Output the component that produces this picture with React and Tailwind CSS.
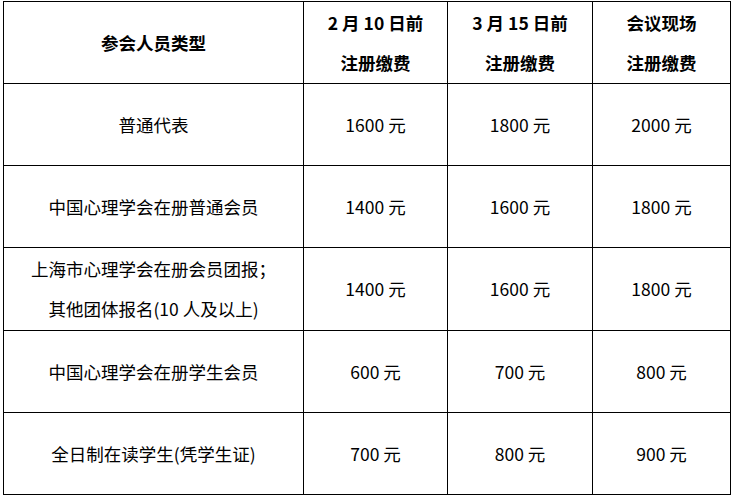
const rows = [
  { type: ['普通代表'], prices: ['1600 元', '1800 元', '2000 元'] },
  { type: ['中国心理学会在册普通会员'], prices: ['1400 元', '1600 元', '1800 元'] },
  { type: ['上海市心理学会在册会员团报；', '其他团体报名(10 人及以上)'], prices: ['1400 元', '1600 元', '1800 元'], tall: true },
  { type: ['中国心理学会在册学生会员'], prices: ['600 元', '700 元', '800 元'] },
  { type: ['全日制在读学生(凭学生证)'], prices: ['700 元', '800 元', '900 元'] }
]

const headers = [
  ['2 月 10 日前', '注册缴费'],
  ['3 月 15 日前', '注册缴费'],
  ['会议现场', '注册缴费']
]

const cell = 'border border-black text-center align-middle p-0 leading-[40px]'

export default function App() {
  return (
    <div
      className="w-[734px] h-[498px] bg-white pl-[3px] pt-[1px] text-[17.5px] text-black"
      style={{ fontFamily: '"Noto Sans CJK SC", "Noto Sans", sans-serif' }}
    >
      <table className="table-fixed border-collapse w-[727px]">
        <colgroup>
          <col className="w-[300px]" />
          <col className="w-[144px]" />
          <col className="w-[145px]" />
          <col className="w-[138px]" />
        </colgroup>
        <thead>
          <tr className="h-[82px]">
            <th className={`${cell} font-bold`}>参会人员类型</th>
            {headers.map((h, i) => (
              <th key={i} className={`${cell} font-bold`}>
                {h.map((line) => (
                  <div key={line}>{line}</div>
                ))}
              </th>
            ))}
          </tr>
        </thead>
        <tbody>
          {rows.map((row, i) => (
            <tr key={i} className={row.tall ? 'h-[83px]' : 'h-[82px]'}>
              <td className={cell}>
                {row.type.map((line) => (
                  <div key={line}>{line}</div>
                ))}
              </td>
              {row.prices.map((p, j) => (
                <td key={j} className={cell}>{p}</td>
              ))}
            </tr>
          ))}
        </tbody>
      </table>
    </div>
  )
}
